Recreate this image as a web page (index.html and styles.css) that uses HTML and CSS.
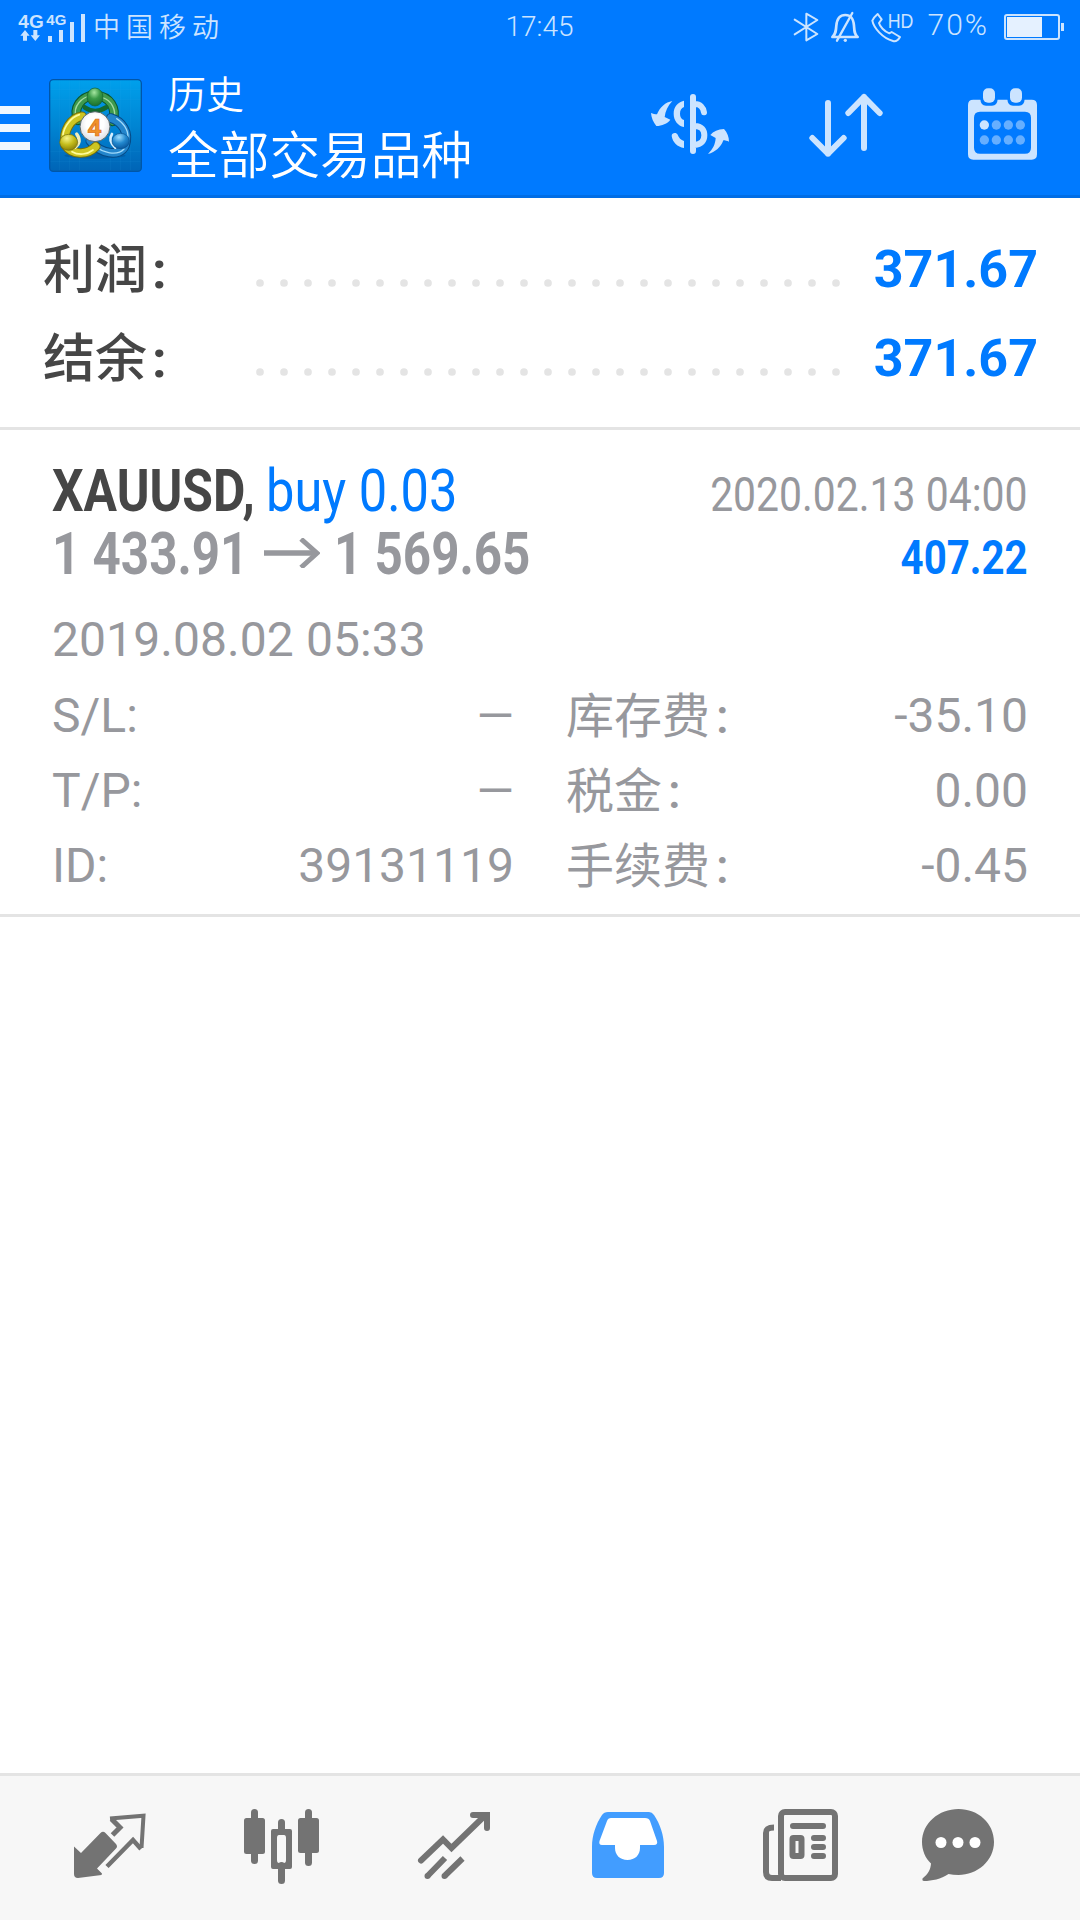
FILE: index.html
```html
<!DOCTYPE html>
<html lang="zh-CN">
<head>
<meta charset="utf-8">
<title>历史</title>
<link rel="stylesheet" href="styles.css">
</head>
<body>
<div class="app">
  <header class="header">
    <div class="status">
      <div class="status-left">
        <svg class="signal" viewBox="54 33 204 93">
          <g fill="#cce4ff">
            <text class="net" x="55" y="80" font-size="55" textLength="76" lengthAdjust="spacingAndGlyphs">4G</text>
            <text class="net" x="139" y="73" font-size="46" textLength="60" lengthAdjust="spacingAndGlyphs">4G</text>
            <path d="M75 87l14 17H81v15H69V104H61zM106 120l14-17h-8V87h-12v16h-8z"/>
            <path d="M144 105h12v18h-12zM177 87h12v36h-12zM210 63h12v60h-12zM243 39h12v84h-12z"/>
          </g>
        </svg>
        <span class="carrier">中国移动</span>
      </div>
      <span class="clock">17:45</span>
      <div class="status-right">
        <svg class="s-icons" viewBox="30 15 372 102" fill="none" stroke="#cce4ff" stroke-width="6" stroke-linejoin="round" stroke-linecap="round">
          <path d="M38 44L106 87 73 106V26L106 45 38 88"/>
          <path stroke-width="8" d="M151 96H227C217 88 217 78 216 62 214 38 206 30 190 30S165 38 163 62C162 78 161 88 151 96z"/>
          <path stroke-width="7" d="M211 24L165 107"/>
          <circle cx="190" cy="106" r="5" fill="#cce4ff" stroke="none"/>
          <path stroke-width="6" d="M287 27L299 43 291 54C294 65 306 79 322 85L329 81 354 96C349 105 340 110 333 108 301 99 275 68 271 47 275 38 281 32 287 27z"/>
          <text class="hd" x="317" y="69" textLength="77" lengthAdjust="spacingAndGlyphs">HD</text>
        </svg>
        <span class="percent">70%</span>
        <svg class="battery" viewBox="0 0 60 26"><rect x="1" y="1" width="54" height="24" rx="2" fill="none" stroke="#cce4ff" stroke-width="2"/><path fill="#e5f1ff" d="M3 3h35v20H3z"/><path fill="#cce4ff" d="M57 9h3v8h-3z"/></svg>
      </div>
    </div>
    <div class="appbar">
      <svg class="menu" viewBox="0 0 30 44"><path fill="#f0f7ff" d="M0 0h30v8H0zM0 18h30v8H0zM0 36h30v8H0z"/></svg>
      <svg class="logo" viewBox="149 238 279 279">
        <defs>
          <linearGradient id="bg" x1="0" y1="0" x2="0" y2="1"><stop offset="0" stop-color="#00a0ec"/><stop offset=".5" stop-color="#0085d3"/><stop offset="1" stop-color="#0064b6"/></linearGradient>
          <radialGradient id="gh" cx=".45" cy=".25" r=".8"><stop offset="0" stop-color="#a5e6a0"/><stop offset=".45" stop-color="#3a9a48"/><stop offset="1" stop-color="#166b2c"/></radialGradient>
          <radialGradient id="yh" cx=".4" cy=".25" r=".8"><stop offset="0" stop-color="#f7f58c"/><stop offset=".5" stop-color="#c5bd1c"/><stop offset="1" stop-color="#857c08"/></radialGradient>
          <radialGradient id="bh" cx=".4" cy=".25" r=".8"><stop offset="0" stop-color="#9bdcff"/><stop offset=".5" stop-color="#2389cf"/><stop offset="1" stop-color="#07549b"/></radialGradient>
          <radialGradient id="wh" cx=".5" cy=".4" r=".6"><stop offset=".5" stop-color="#fff"/><stop offset="1" stop-color="#dcdce2"/></radialGradient>
        </defs>
        <rect x="151" y="240" width="275" height="275" rx="11" fill="url(#bg)" stroke="#0056a8" stroke-width="4"/>
        <path d="M181 243V512M211 243V512M241 243V512M333 243V512M363 243V512M393 243V512M153 270H424M153 300H424M153 455H424M153 485H424" stroke="#35b0ee" stroke-opacity=".2" stroke-width="1.5"/>
        <ellipse cx="287" cy="468" rx="92" ry="9" fill="#003e7c" opacity=".3"/>
        <g fill="none" stroke-linecap="round">
          <path d="M236 362C220 325 244 290 287 286 331 290 354 325 340 365" stroke="#0c572c" stroke-width="29"/>
          <path d="M236 362C220 325 244 290 287 286 331 290 354 325 340 365" stroke="#3f9a4d" stroke-width="23"/>
          <path d="M230 350C220 320 248 292 275 288M310 294C337 303 350 330 345 357" stroke="#a2d9a1" stroke-width="4"/>
          <path d="M334 355C368 365 391 398 377 438 361 475 302 461 273 424" stroke="#064a85" stroke-width="29"/>
          <path d="M334 355C368 365 391 398 377 438 361 475 302 461 273 424" stroke="#2385cc" stroke-width="23"/>
          <path d="M352 357C381 376 391 403 383 421M374 448C354 470 309 460 285 437" stroke="#a1dafa" stroke-width="4"/>
          <path d="M248 350C215 355 190 392 198 436 218 466 263 468 289 441" stroke="#777009" stroke-width="29"/>
          <path d="M248 350C215 355 190 392 198 436 218 466 263 468 289 441" stroke="#cdc522" stroke-width="23"/>
          <path d="M240 345C215 353 195 379 191 405M218 456C239 468 265 464 281 451" stroke="#fffb9a" stroke-width="5"/>
          <path d="M256 323Q287 345 321 323" stroke="#136a31" stroke-width="14"/>
          <path d="M227 443Q249 426 232 403" stroke="#f1edb8" stroke-width="10"/>
          <path d="M338 403Q325 423 348 444" stroke="#d5efff" stroke-width="8"/>
        </g>
        <ellipse cx="287" cy="292" rx="24" ry="27" fill="url(#gh)" stroke="#12612d" stroke-width="2"/>
        <ellipse cx="208" cy="428" rx="27" ry="24" fill="url(#yh)" stroke="#6d690b" stroke-width="2"/>
        <ellipse cx="364" cy="424" rx="26" ry="23" fill="url(#bh)" stroke="#07508e" stroke-width="2"/>
        <circle cx="287" cy="381" r="45" fill="url(#wh)" stroke="#55676a" stroke-width="3"/>
        <text class="four" x="286" y="408" text-anchor="middle">4</text>
      </svg>
      <div class="titles">
        <div class="title">历史</div>
        <div class="subtitle">全部交易品种</div>
      </div>
      <div class="actions">
        <svg class="act-currency" viewBox="90 69 240 186">
          <path fill="#cce4ff" d="M93 129C99 131 105 133 111 133 120 111 136 97 157 93 143 108 136 124 134 141L151 149C142 161 126 167 109 168 100 157 94 144 93 129z"/>
          <path fill="#cce4ff" d="M327 215C322 213 315 211 310 211 303 231 286 247 264 252 279 237 286 222 287 204L271 195C280 184 294 178 312 177 322 188 327 201 327 215z"/>
          <path fill="none" stroke="#cce4ff" stroke-width="18" stroke-linecap="round" d="M219 81V243M225 102C240 102 250 113 252 127M225 168C245 168 253 181 253 196 253 212 244 224 224 225"/>
          <path fill="#cce4ff" d="M192 92V111C184 114 180 121 180 131S184 147 192 150V171C173 167 161 151 161 131S173 96 192 92zM192 234V213C183 210 176 203 173 194 170 187 155 187 155 198 158 217 172 231 192 234z"/>
        </svg>
        <svg class="act-sort" viewBox="567 69 222 195" fill="none" stroke="#cce4ff" stroke-width="18" stroke-linecap="round" stroke-linejoin="round"><path d="M624 99V251M577 204L624 251 671 204M732 234V81M685 129L732 81 779 129"/></svg>
        <svg class="act-cal" viewBox="1044 55 207 216">
          <path fill="#cce4ff" fill-rule="evenodd" d="M1060 90H1235Q1251 90 1251 106V254Q1251 270 1235 270H1060Q1044 270 1044 254V106Q1044 90 1060 90zM1080 126Q1062 126 1062 144V234Q1062 252 1080 252H1215Q1233 252 1233 234V144Q1233 126 1215 126z"/>
          <path fill="#007aff" d="M1081 88H1133Q1132 108 1116 108H1098Q1082 108 1081 88zM1162 88H1214Q1213 108 1197 108H1179Q1163 108 1162 88z"/>
          <rect x="1089" y="56" width="36" height="43" rx="15" fill="#cce4ff"/><rect x="1170" y="56" width="36" height="43" rx="15" fill="#cce4ff"/>
          <g fill="#66afff"><circle cx="1093" cy="166" r="14" fill="#cce4ff"/><circle cx="1129" cy="166" r="14"/><circle cx="1165" cy="166" r="14"/><circle cx="1201" cy="166" r="14"/><circle cx="1093" cy="211" r="14"/><circle cx="1129" cy="211" r="14"/><circle cx="1165" cy="211" r="14"/><circle cx="1201" cy="211" r="14"/></g>
        </svg>
      </div>
    </div>
  </header>

  <section class="summary">
    <div class="sum-row"><span class="sum-label">利润<b class="colon">:</b></span><svg class="dots" viewBox="0 0 584 8"><path d="M4 4H581"/></svg><span class="sum-value">371.67</span></div>
    <div class="sum-row"><span class="sum-label">结余<b class="colon">:</b></span><svg class="dots" viewBox="0 0 584 8"><path d="M4 4H581"/></svg><span class="sum-value">371.67</span></div>
  </section>

  <section class="record">
    <div class="line">
      <div class="deal"><b class="symbol">XAUUSD,</b><span class="side">buy 0.03</span></div>
      <div class="close-time">2020.02.13 04:00</div>
    </div>
    <div class="line">
      <div class="prices"><span class="price">1 433.91</span><svg class="arrow" viewBox="0 0 56 30"><path d="M0 15H53" stroke-width="5.4"/><path d="M37 1L53 15.2 37 29.5" stroke-width="5"/></svg><span class="price">1 569.65</span></div>
      <div class="gain">407.22</div>
    </div>
    <div class="open-time">2019.08.02 05:33</div>
    <div class="details">
      <span>S/L:</span><span class="val dash">—</span><span class="key">库存费<i class="colon">:</i></span><span class="val">-35.10</span>
      <span>T/P:</span><span class="val dash">—</span><span class="key">税金<i class="colon">:</i></span><span class="val">0.00</span>
      <span>ID:</span><span class="val">39131119</span><span class="key">手续费<i class="colon">:</i></span><span class="val">-0.45</span>
    </div>
  </section>

  <main class="blank"></main>

  <nav class="tabs">
    <svg class="tab" viewBox="0 0 80 80"><g fill="#737373">
      <path d="M4 39.5L11 46 30.5 26Q33 23.500 35.500 26L46 37Q48 39.500 46 41.500L27 61.500 32 66.500 31.500 68 8 71Q4 71 4 67z"/></g>
      <g fill="none" stroke="#737373" stroke-linejoin="miter"><path stroke-width="5" d="M42.500 28L50 20.500 41.500 12"/><path stroke-width="4" d="M40 11.500L73.500 8.700 71.500 41"/><path stroke-width="4.500" d="M37 59.500L63 33 71 42"/></g>
    </svg>
    <svg class="tab" viewBox="2 0 80 80"><g fill="#737373"><rect x="3" y="11" width="21" height="36" rx="2.500"/><rect x="10" y="2" width="7" height="55" rx="3.500"/><rect x="57" y="11" width="21" height="35" rx="2.500"/><rect x="64" y="2" width="7" height="57" rx="3.500"/><rect x="37" y="12" width="7" height="16" rx="3.500"/><rect x="37" y="55" width="7" height="22" rx="3.500"/><path fill-rule="evenodd" d="M32 22H49Q51 22 51 24V60Q51 62 49 62H32Q30 62 30 60V24Q30 22 32 22zM38 28Q36 28 36 31V53Q36 56 38 56H43Q45 56 45 53V31Q45 28 43 28z"/></g></svg>
    <svg class="tab" viewBox="1 0 80 80" fill="none" stroke="#737373" stroke-width="6" stroke-linejoin="miter"><path stroke-linecap="round" d="M6 53.500L28 32.500 36.500 41 70 8.500M58 8H72V21"/><path d="M30 51L13 68.500M47.500 51.500L30 68.500"/><circle cx="12.500" cy="69" r="1.500" stroke-width="3"/><circle cx="29.500" cy="69" r="1.500" stroke-width="3"/></svg>
    <svg class="tab" viewBox="0 0 80 80"><path fill="#fff" d="M18 9H61L70 40H52V54H25V40H8z"/><path fill="#429dff" fill-rule="evenodd" d="M19 5H60Q63 5 65 8C71 17 75 28 75 40V66Q75 71 70 71H8Q3 71 3 66V40C3 28 7 17 13 8Q15 5 19 5zM22 11Q19 11 18 14L10.500 34Q9.500 38 13 38H26V41C26 48 31 53 38.500 53S51 48 51 41V38H65Q69 38 68 34L61 14Q60 11 56 11z"/></svg>
    <svg class="tab" viewBox="1 0 80 80" fill="none" stroke="#737373" stroke-width="6"><rect x="20" y="5" width="54" height="66" rx="4"/><path d="M13 20.500C7 20.500 5 22 5 26V65Q5 71 11 71H20"/><path stroke-linecap="round" d="M32 19H62M53 31H62M53 40H62M53 49H62"/><rect x="31.500" y="31" width="9" height="18" rx="1"/></svg>
    <svg class="tab chat" viewBox="0 0 80 80"><path fill="#737373" fill-rule="evenodd" d="M38.500 2C58 2 74 16 74 35S57 68 38.500 68Q33 68 28.500 67C21 72 12 74 4 74Q2 74 2.500 71.500C8 67 10.500 63 11 56.500 5 51 2 43 2 35 2 16 19 2 38.500 2z"/><g fill="#fff"><circle cx="21" cy="35.500" r="5.500"/><circle cx="38" cy="35.500" r="5.500"/><circle cx="55" cy="35.500" r="5.500"/></g></svg>
  </nav>
</div>
</body>
</html>
```
FILE: styles.css
```css
* { box-sizing: border-box; }
body {
  margin: 0;
  background: #fff;
  font-family: Roboto, "Noto Sans CJK SC", sans-serif;
  color: #97989d;
}
svg { display: block; flex: none; }
.app { width: 1080px; height: 1920px; display: flex; flex-direction: column; overflow: hidden; }

.header { height: 198px; background: #007aff; border-bottom: 3px solid #006de5; }
.status {
  height: 54px;
  display: grid;
  grid-template-columns: 1fr auto 1fr;
  align-items: center;
  padding: 0 16px 0 18px;
  color: #cce4ff;
}
.status-left, .status-right { display: flex; align-items: center; }
.status-right { justify-content: flex-end; }
.signal { width: 68px; height: 31px; }
.net { font-family: "Liberation Sans", sans-serif; font-weight: 700; }
.carrier { font-family: "Noto Sans CJK SC", sans-serif; font-size: 27px; font-weight: 350; line-height: 52px; height: 54px; letter-spacing: 6px; margin-left: 7px; }
.clock { font-size: 28px; font-weight: 350; line-height: 54px; letter-spacing: 0; padding-right: 3px; }
.s-icons { width: 124px; height: 34px; overflow: visible; }
.hd { font-family: "Liberation Sans", sans-serif; font-size: 60px; fill: #cce4ff; stroke: none; }
.percent { font-size: 30px; font-weight: 350; line-height: 50px; height: 54px; margin: 0 15px 0 12px; letter-spacing: 2px; }
.battery { width: 60px; height: 26px; }

.appbar { height: 141px; display: flex; align-items: flex-start; }
.menu { width: 30px; height: 44px; margin-top: 52px; }
.logo { width: 93px; height: 93px; margin: 25px 0 0 19px; }
.four { font-family: "Open Sans", sans-serif; font-size: 72px; font-weight: 700; fill: #f0922a; stroke: #d96a1a; stroke-width: 2; }
.titles { margin-left: 26px; color: #fff; font-family: "Noto Sans CJK SC", sans-serif; font-weight: 350; }
.title { font-size: 38px; line-height: 48px; margin-top: 14px; }
.subtitle { font-size: 50.7px; line-height: 70px; margin-top: 1px; }
.actions { margin-left: auto; display: flex; align-items: flex-start; padding-right: 43px; }
.act-currency { width: 80px; height: 62px; margin: 39px 79px 0 0; }
.act-sort { width: 74px; height: 65px; margin: 39px 85px 0 0; }
.act-cal { width: 69px; height: 72px; margin-top: 34px; }

.summary { padding: 27px 42px 24px 43px; border-bottom: 3px solid #e4e4e4; }
.sum-row { height: 89px; line-height: 89px; display: flex; font-size: 52px; }
.sum-label { width: 213px; color: #464646; font-weight: 500; line-height: 92px; }
.sum-label .colon { font-weight: 700; margin-left: 5px; }
.dots { width: 584px; height: 8px; margin-top: 54px; }
.dots path { fill: none; stroke: #e4e4e4; stroke-width: 7.700; stroke-linecap: round; stroke-dasharray: 0 24; }
.sum-value { margin-left: auto; color: #007aff; font-weight: 700; }

.record { padding: 29px 52px 11px; border-bottom: 3px solid #e4e4e4; font-size: 48px; }
.line { height: 63px; line-height: 63px; display: flex; justify-content: space-between; align-items: baseline; white-space: nowrap; }
.deal, .price { font-size: 60px; }
.deal { display: flex; }
.symbol { width: 214px; color: #464646; transform: scaleX(.83); transform-origin: left; }
.side { color: #007aff; transform: scaleX(.843); transform-origin: left; }
.symbol, .price { display: block; }
.prices { display: flex; align-items: baseline; }
.price { width: 212px; font-weight: 700; transform: scaleX(.822); transform-origin: left; }
.symbol, .price { transform-origin: 0 50%; }
.arrow { width: 56px; height: 30px; margin: 16px 14px 0 0; align-self: flex-start; fill: none; stroke: #97989d; }
.close-time { transform: scaleX(.852); transform-origin: right; }
.gain { color: #007aff; font-weight: 700; transform: scaleX(.838); transform-origin: right; }
.open-time { line-height: 75px; margin-top: 17px; letter-spacing: .08px; }
.details { display: grid; grid-template-columns: 130px 332px 260px 1fr; grid-auto-rows: 75px; line-height: 75px; margin-top: 1px; }
.val { text-align: right; }
.key { padding-left: 52px; line-height: 77px; height: 75px; }
.key .colon { font-style: normal; font-weight: 500; margin-left: 6px; }

.blank { flex: 1; }
.tabs {
  height: 147px;
  background: #f7f7f7;
  border-top: 3px solid #e4e4e4;
  display: flex;
  gap: 93px;
  padding: 31px 0 0 70px;
}
.tab { width: 80px; height: 80px; }
.chat { margin-left: -15px; }
```
